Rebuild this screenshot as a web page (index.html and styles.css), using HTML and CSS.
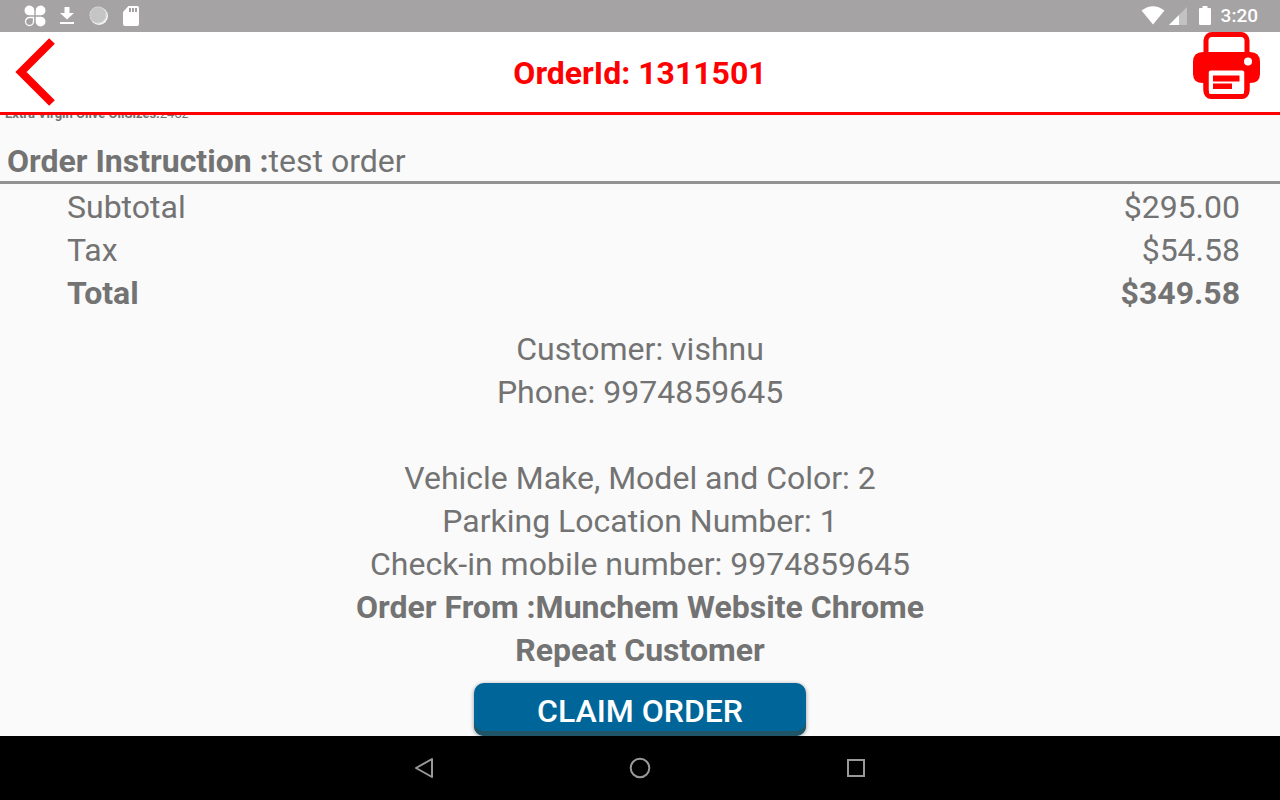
FILE: index.html
```html
<!DOCTYPE html>
<html lang="en">
<head>
    <meta charset="UTF-8">
    <meta name="viewport" content="width=device-width, initial-scale=1.0">
    <title>OrderId: 1311501</title>
    <link rel="stylesheet" href="styles.css">
</head>
<body>
    <!-- status bar -->
    <div class="status">
        <div class="status__group">
            <svg width="22" height="22" viewBox="0 0 22 22" fill="#fff">
                <path d="M10.300 10.300H5.500A4.900 4.900 0 1 1 10.300 5.500Z"/>
                <path d="M11.700 10.300V5.500A4.900 4.900 0 1 1 16.500 10.300Z"/>
                <path d="M11.700 11.700H16.500A4.900 4.900 0 1 1 11.700 16.500Z"/>
                <path d="M9.500 12.500H5.500A4 4 0 1 0 9.500 16.500Z" fill="none" stroke="#fff" stroke-width="1.300"/>
            </svg>
            <svg width="22" height="22" viewBox="0 0 22 22" fill="#fff">
                <path d="M8.500 2h5v6H18l-7 6.500L4 8h4.500zM4 17h14v2H4z"/>
            </svg>
            <svg width="22" height="22" viewBox="0 0 22 22">
                <circle cx="11" cy="11" r="9" fill="#f4f4f4"/>
                <circle cx="10" cy="10" r="8.500" fill="#c6c5c5"/>
                <circle cx="10" cy="10" r="8" fill="none" stroke="#dcdcdc" stroke-width="1" stroke-dasharray="2 1"/>
            </svg>
            <svg width="22" height="22" viewBox="0 0 22 22">
                <path d="M8.500 1H17a2 2 0 0 1 2 2v16a2 2 0 0 1-2 2H5a2 2 0 0 1-2-2V7z" fill="#fff"/>
                <path d="M9 3h2v4H9zM12 3h2v4h-2zM15 3h2v4h-2z" fill="#a5a3a4"/>
            </svg>
        </div>
        <div class="status__group status__group--right">
            <svg width="24" height="20" viewBox="0 0 24 20">
                <path d="M0.500 4.500Q12-4 23.500 4.500L12 18.500Z" fill="#fff"/>
            </svg>
            <svg width="18" height="20" viewBox="0 0 18 20">
                <path d="M0 19L18 1V19Z" fill="#c3c2c2"/>
                <path d="M0 19L10 9V19Z" fill="#fff"/>
            </svg>
            <svg class="status__battery" width="12" height="20" viewBox="0 0 12 20">
                <path d="M3.500 0h5v2H11a1 1 0 0 1 1 1v15a1 1 0 0 1-1 1H1a1 1 0 0 1-1-1V3a1 1 0 0 1 1-1h2.500z" fill="#fff"/>
            </svg>
            <span class="status__time">3:20</span>
        </div>
    </div>

    <header class="header">
        <button class="icon-btn" aria-label="Back">
            <svg width="40" height="68" viewBox="0 0 40 68">
                <path d="M37 3L6 34L37 65" fill="none" stroke="#f00" stroke-width="8"/>
            </svg>
        </button>
        <h1 class="header__title">OrderId: 1311501</h1>
        <button class="icon-btn icon-btn--print" aria-label="Print">
            <svg width="67" height="67" viewBox="0 0 67 67">
                <rect x="13" y="2.500" width="41" height="61" rx="6" fill="#fff" stroke="#f00" stroke-width="5"/>
                <path d="M10 20H57Q67 20 67 30V42Q67 51 57 51H54V37H13V51H10Q0 51 0 42V30Q0 20 10 20Z" fill="#f00"/>
                <path d="M16 39H51V62H16Z" fill="#fff"/>
                <rect x="13" y="36" width="41" height="28.500" rx="5" fill="none" stroke="#f00" stroke-width="5"/>
                <path d="M20 43.500H46.500V49.500H20zM20 51.500H39V57H20z" fill="#f00"/>
                <circle cx="55" cy="29.500" r="4" fill="#fff"/>
            </svg>
        </button>
    </header>

    <main class="order">
        <p class="order__item"><b>Extra Virgin Olive OilSizes:</b>24oz</p>
        <p class="order__note"><b>Order Instruction :</b>test order</p>
        <dl class="totals">
            <div class="totals__row">
                <dt>Subtotal</dt>
                <dd>$295.00</dd>
            </div>
            <div class="totals__row">
                <dt>Tax</dt>
                <dd>$54.58</dd>
            </div>
            <div class="totals__row totals__row--sum">
                <dt>Total</dt>
                <dd>$349.58</dd>
            </div>
        </dl>
        <div class="customer">
            <p>Customer: vishnu</p>
            <p>Phone: 9974859645</p>
            <br>
            <p>Vehicle Make, Model and Color: 2</p>
            <p>Parking Location Number: 1</p>
            <p>Check-in mobile number: 9974859645</p>
            <p><b>Order From :Munchem Website Chrome</b></p>
            <p><b>Repeat Customer</b></p>
        </div>
        <button class="claim-btn">CLAIM ORDER</button>
    </main>

    <!-- system navigation -->
    <nav class="navbar">
        <button class="icon-btn" aria-label="System back">
            <svg width="24" height="24" viewBox="0 0 24 24" fill="none" stroke="#999" stroke-width="2" stroke-linejoin="round">
                <path d="M20 3V21L4 12Z"/>
            </svg>
        </button>
        <button class="icon-btn" aria-label="Home">
            <svg width="24" height="24" viewBox="0 0 24 24" fill="none" stroke="#999" stroke-width="2">
                <circle cx="12" cy="12" r="9.300"/>
            </svg>
        </button>
        <button class="icon-btn" aria-label="Recent apps">
            <svg width="24" height="24" viewBox="0 0 24 24" fill="none" stroke="#999" stroke-width="2">
                <path d="M4 4H20V20H4Z"/>
            </svg>
        </button>
    </nav>
</body>
</html>
```

FILE: styles.css
```css
* {
    margin: 0;
    padding: 0;
    box-sizing: border-box;
}

body {
    display: flex;
    flex-direction: column;
    height: 100vh;
    overflow: hidden;
    background: #fafafa;
    color: #737373;
    font-family: Roboto, sans-serif;
    font-size: 32px;
    line-height: 43px;
}

svg {
    display: block;
}

.icon-btn {
    border: none;
    background: none;
    cursor: pointer;
}

/* status bar */
.status {
    display: flex;
    justify-content: space-between;
    align-items: center;
    flex-shrink: 0;
    height: 32px;
    padding: 0 22px 0 24px;
    background: #a5a3a4;
    color: #fff;
}

.status__group {
    display: flex;
    align-items: center;
    gap: 10px;
}

.status__group--right {
    gap: 4px;
}

.status__battery {
    margin: 0 6px 0 8px;
}

.status__time {
    font-size: 19px;
    font-weight: 500;
    line-height: 32px;
}

/* header */
.header {
    display: grid;
    grid-template-columns: 1fr auto 1fr;
    align-items: center;
    flex-shrink: 0;
    height: 83px;
    padding: 0 15px;
    background: #fff;
    border-bottom: 3px solid #f00;
}

.header .icon-btn {
    justify-self: start;
}

.header .icon-btn--print {
    justify-self: end;
    align-self: start;
    margin-right: 5px;
}

.header__title {
    padding-top: 2px;
    color: #f00;
    font-size: 32px;
    font-weight: 700;
}

/* order */
.order {
    display: flex;
    flex-direction: column;
    justify-content: flex-end;
    flex: 1;
    min-height: 0;
    overflow: hidden;
}

.order__item {
    padding: 0 5px 16px;
    font-size: 13px;
    line-height: 16px;
}

.order__note {
    padding: 4px 7px 0;
    border-bottom: 3px solid #929292;
    line-height: 39px;
}

.totals {
    padding: 2px 40px 0 67px;
}

.totals__row {
    display: flex;
    justify-content: space-between;
}

.totals__row--sum {
    font-weight: 700;
}

.customer {
    padding: 13px 0 11px;
    text-align: center;
}

.claim-btn {
    align-self: center;
    flex-shrink: 0;
    width: 26%;
    height: 53px;
    padding-top: 3px;
    border: none;
    border-radius: 10px;
    background: #006699;
    box-shadow: inset 0 -5px 0 #1f5566, 0 1px 4px rgba(0, 0, 0, 0.4);
    color: #fff;
    font-family: inherit;
    font-size: 32px;
    font-weight: 500;
    line-height: 43px;
    cursor: pointer;
}

/* navigation */
.navbar {
    display: flex;
    justify-content: center;
    align-items: center;
    gap: 192px;
    flex-shrink: 0;
    height: 64px;
    background: #000;
}
```
